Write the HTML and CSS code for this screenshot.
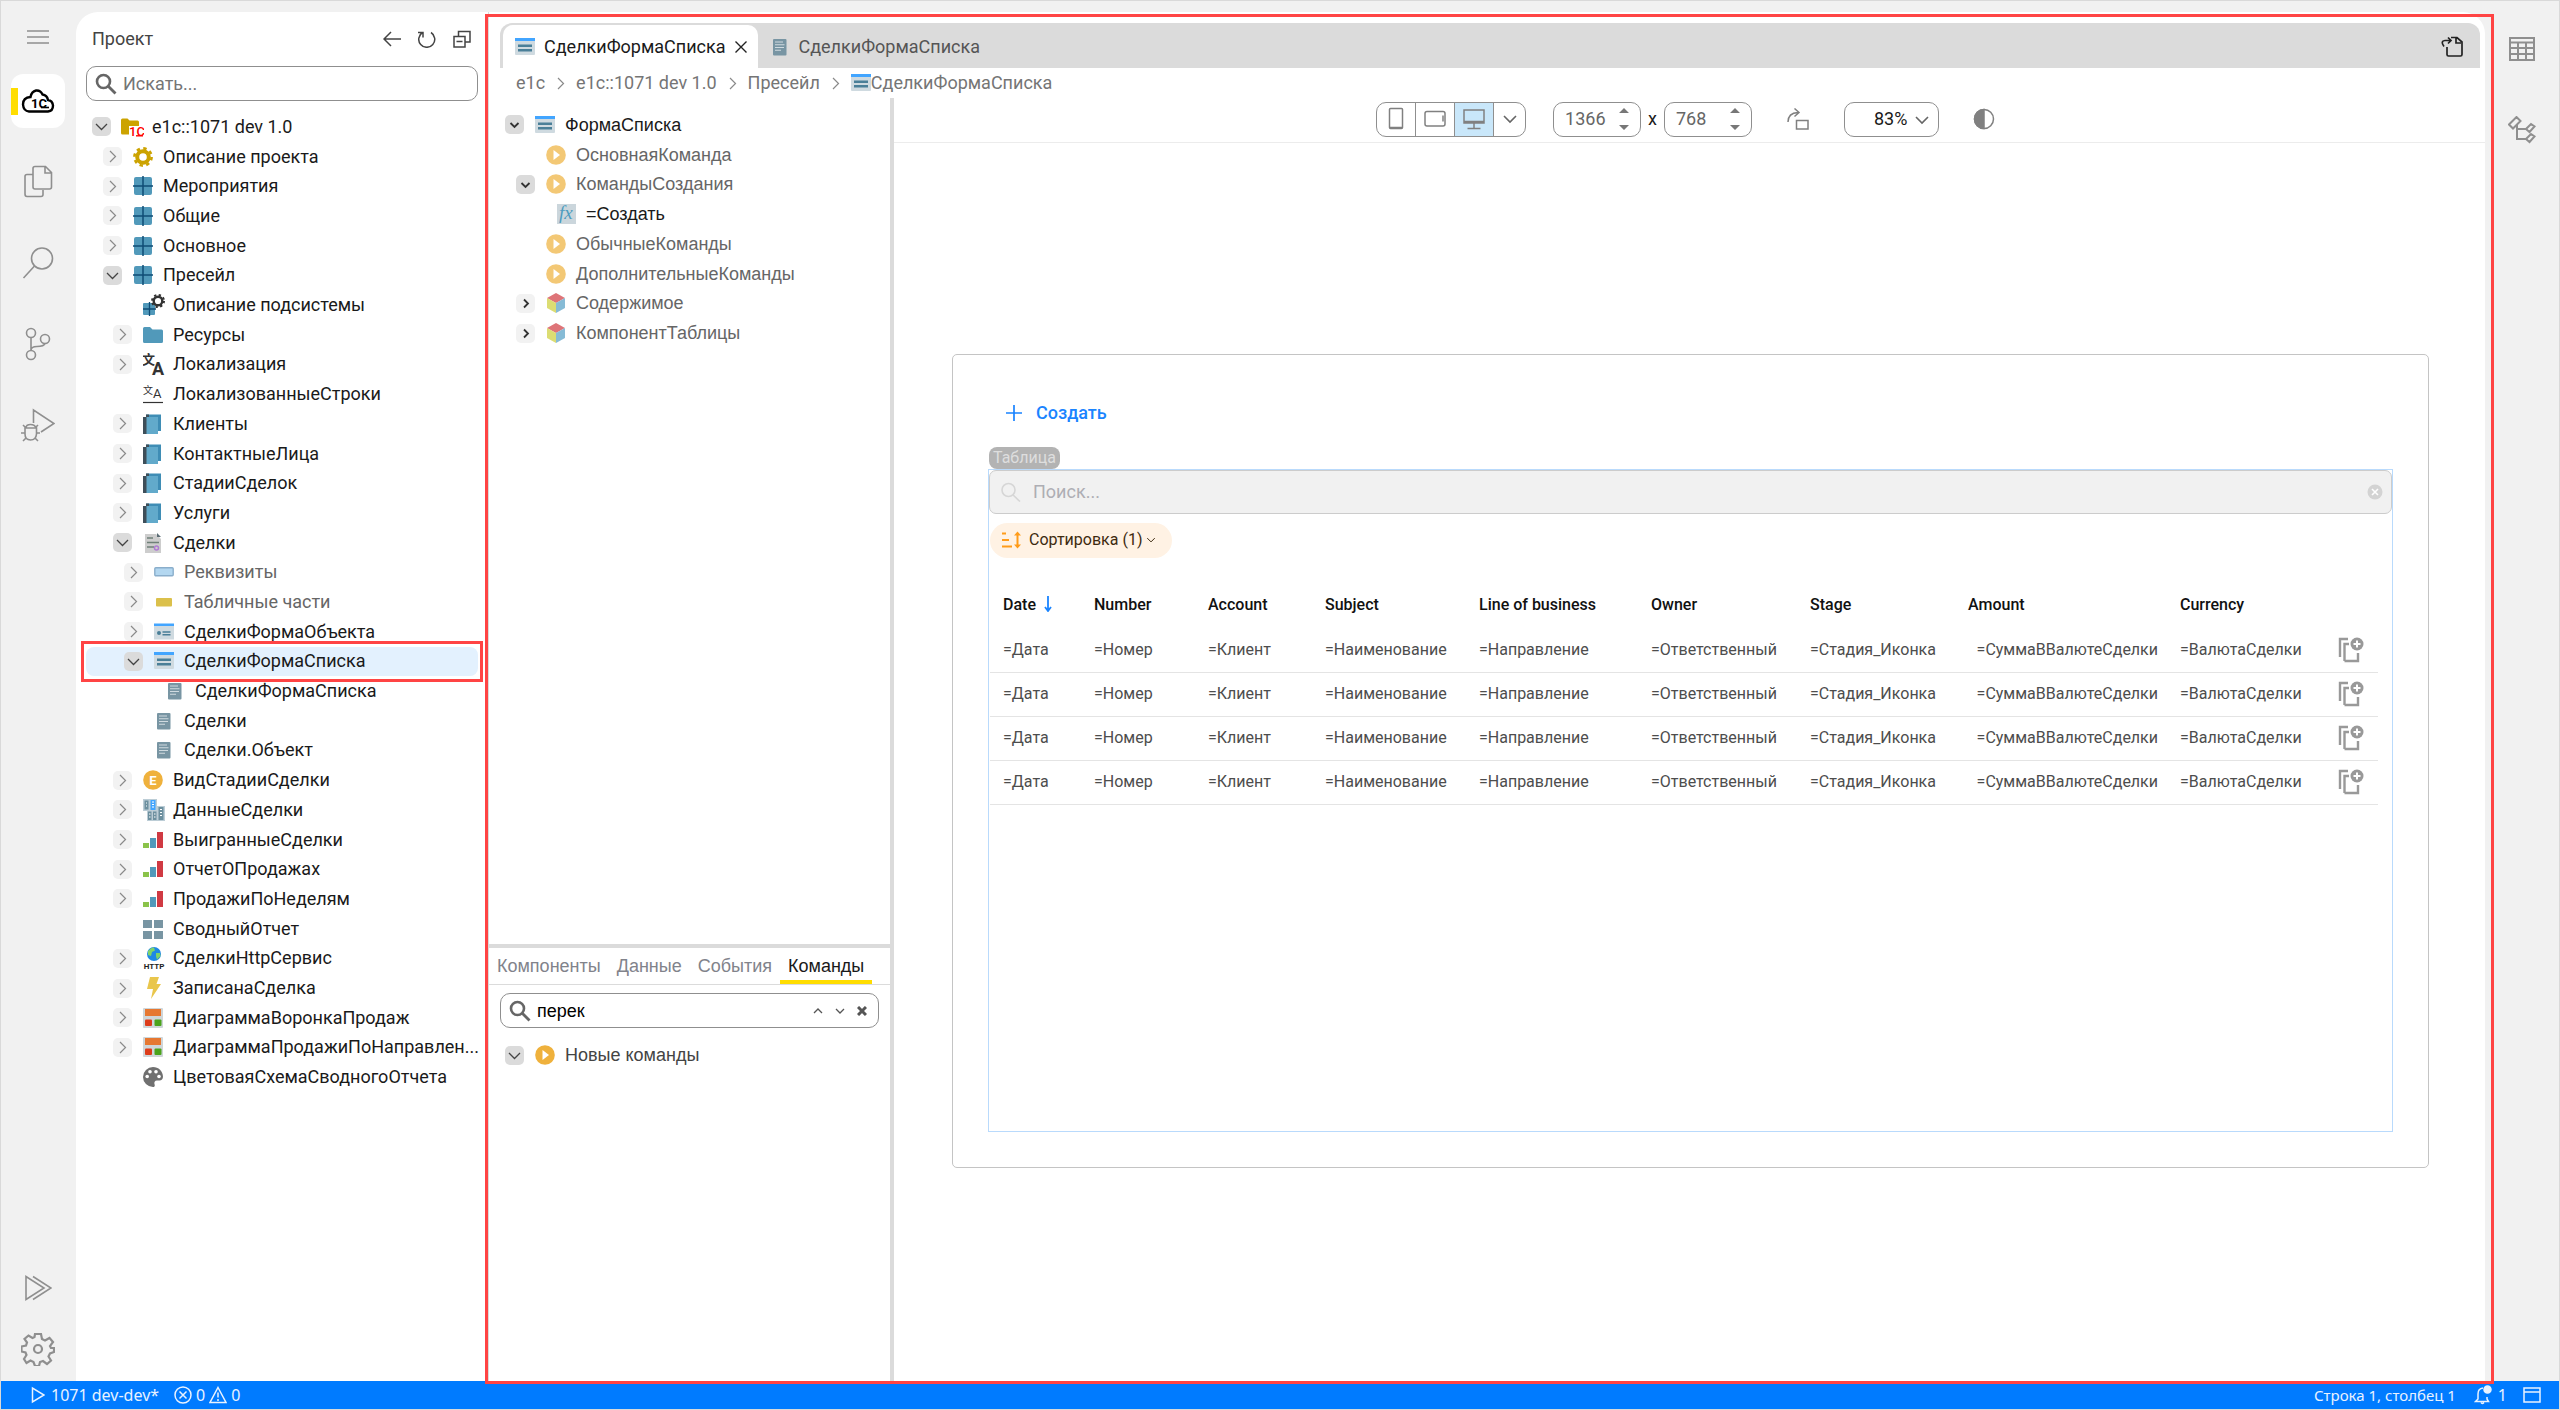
FILE: index.html
```html
<!DOCTYPE html>
<html lang="ru">
<head>
    <meta charset="UTF-8">
    <meta name="viewport" content="width=device-width, initial-scale=1.0">
    <title>СделкиФормаСписка</title>
    <link rel="stylesheet" href="styles.css">
</head>
<body>
    <!-- набор иконок -->
    <svg class="sprite" aria-hidden="true">
        <symbol id="right" viewBox="0 0 19 19"><path d="M7 4l5.500 5.500L7 15" fill="none" stroke="#8a8a8a" stroke-width="1.200"/></symbol>
        <symbol id="down" viewBox="0 0 19 19"><path d="M4 7l5.500 5.500L15 7" fill="none" stroke="#444" stroke-width="1.300"/></symbol>
        <symbol id="right-b" viewBox="0 0 19 19"><path d="M8 5.500l4 4-4 4" fill="none" stroke="#333" stroke-width="1.800"/></symbol>
        <symbol id="down-b" viewBox="0 0 19 19"><path d="M5.500 8l4 4 4-4" fill="none" stroke="#333" stroke-width="1.800"/></symbol>
        <symbol id="chev" viewBox="0 0 16 16"><path d="M2 5l6 6 6-6" fill="none" stroke="currentColor" stroke-width="1.600"/></symbol>
        <symbol id="lens" viewBox="0 0 22 22"><circle cx="8.500" cy="8.500" r="6.500" fill="none" stroke="#666" stroke-width="2.600"/><path d="M13 13l7.500 7.500" stroke="#666" stroke-width="2.800"/></symbol>

        <symbol id="root" viewBox="0 0 24 20"><path d="M1 3q0-1.500 1.500-1.500h5l2 2h8q1.500 0 1.500 1.500v4H9v8.500H2.500Q1 17.500 1 16z" fill="#cca300"/><text x="9" y="19" font-family="Roboto" font-size="13" font-weight="500" fill="#f00">1C</text><path d="M16 18.800h7" stroke="#f00" stroke-width="1.400"/></symbol>
        <symbol id="cog" viewBox="0 0 20 20"><circle cx="10" cy="10" r="5.800" fill="none" stroke="#cca300" stroke-width="4"/><circle cx="10" cy="10" r="8.600" fill="none" stroke="#cca300" stroke-width="2.600" stroke-dasharray="3.400 3.354"/></symbol>
        <symbol id="sub" viewBox="0 0 20 20"><rect x="1" y="1" width="18" height="18" rx="2" fill="#5199ba"/><path d="M10 0v20M0 10h20" stroke="#0f4c75" stroke-width="1.500"/></symbol>
        <symbol id="subcog" viewBox="0 0 22 22"><rect x="0" y="9" width="12" height="12" rx="1" fill="#5199ba"/><path d="M6.500 8v14M0 15h13" stroke="#0f4c75" stroke-width="1.300"/><circle cx="15" cy="7" r="4.300" fill="#fff" stroke="#333" stroke-width="2.400"/><circle cx="15" cy="7" r="6" fill="none" stroke="#333" stroke-width="2" stroke-dasharray="2.300 2.412"/></symbol>
        <symbol id="folder" viewBox="0 0 20 20"><path d="M0 3.500Q0 2 1.500 2H7l2.500 2.500h9q1.500 0 1.500 1.500v10.500q0 1.500-1.500 1.500h-17Q0 18 0 16.500z" fill="#5199ba"/></symbol>
        <symbol id="lang" viewBox="0 0 22 22"><text x="-1" y="11" font-family="Noto Sans CJK SC" font-size="13" font-weight="700" fill="#333">文</text><text x="9" y="22" font-family="Roboto" font-size="18" font-weight="700" fill="#333">A</text></symbol>
        <symbol id="langs" viewBox="0 0 20 20"><text x="0" y="10" font-family="Noto Sans CJK SC" font-size="10" fill="#333">文</text><text x="10" y="14" font-family="Roboto" font-size="13" fill="#333">A</text><path d="M0 18.500h20" stroke="#333" stroke-width="1.200"/></symbol>
        <symbol id="book" viewBox="0 0 20 20"><path d="M3 .500h15V17h-3z" fill="#3f8db5"/><path d="M0 3h4v17H0zM3 .500h3V3H3z" fill="#3e4e59"/><path d="M3.500 3H15v17H3.500z" fill="#62aacb"/></symbol>
        <symbol id="doc" viewBox="0 0 20 20"><path d="M2 1h11l5 5v14H2z" fill="#cdcdcd"/><path d="M14 0l4 4h-4z" fill="#5b6c74"/><path d="M4 5h6M4 9.500h12M4 14h7" stroke="#6f8078" stroke-width="1.300"/><circle cx="13.500" cy="15" r="2" fill="none" stroke="#b07bd4" stroke-width="1.500"/></symbol>
        <symbol id="attr" viewBox="0 0 20 20"><rect x=".800" y="5.800" width="18.400" height="8" rx="1" fill="#b3d7f0" stroke="#8aaecb" stroke-width="1.400"/></symbol>
        <symbol id="tab" viewBox="0 0 20 20"><rect x="2" y="6" width="16" height="8.500" rx="1" fill="#dbc04b"/></symbol>
        <symbol id="objform" viewBox="0 0 20 20"><rect y="2" width="20" height="15.500" fill="#cfdae0"/><rect y="1.500" width="20" height="2.500" fill="#42a5ff"/><circle cx="5" cy="11" r="2" fill="#4a7f98"/><path d="M8.500 10h8M8.500 12.700h8" stroke="#4a7f98" stroke-width="1.400"/></symbol>
        <symbol id="form" viewBox="0 0 20 20"><rect y="2" width="20" height="16" rx="1" fill="#cfdae0"/><rect y="1" width="20" height="3" fill="#42a5ff"/><rect x="3" y="7.500" width="14" height="2.500" fill="#4a7f98"/><rect x="3" y="12" width="14" height="2.500" fill="#4a7f98"/></symbol>
        <symbol id="module" viewBox="0 0 20 20"><rect x="3" y="2" width="13.500" height="16.500" rx="1" fill="#7895a3"/><path d="M5 5h8M5 7.700h9.500M5 10.500h9M5 13.200h6" stroke="#cfdae0" stroke-width="1.100"/></symbol>
        <symbol id="enum" viewBox="0 0 20 20"><circle cx="10" cy="10" r="9.800" fill="#efb13c"/><text x="10" y="14.800" text-anchor="middle" font-family="Roboto" font-size="13" font-weight="700" fill="#fff">E</text></symbol>
        <symbol id="reg" viewBox="0 0 22 22"><rect width="14" height="12" fill="#bccdd6"/><rect x="4" y="7" width="18" height="15" fill="#bccdd6"/><path d="M1.500 1.500h4v9h-4zM5 12.500h3.500V21H5zM10 12.500h3.500V21H10zM15.500 8h5v13h-5z" fill="#6d909f"/><path d="M7.500 1h5v10h-5z" fill="#42a5ff"/><path d="M9 3h2M9 5.500h2M9 8h2M3 4h1M3 7h1M6 15h1.500M6 18h1.500M11 15h1.500M11 18h1.500M17 10.500h2M17 13.500h2M17 16.500h2" stroke="#fff"/></symbol>
        <symbol id="report" viewBox="0 0 20 20"><rect y="13" width="6" height="5" fill="#8bc34a"/><rect x="7" y="8" width="6" height="10" fill="#5199ba"/><rect x="14" y="2" width="6" height="16" fill="#d03a43"/></symbol>
        <symbol id="grid" viewBox="0 0 20 20"><path d="M0 1h9v8H0zM11 1h9v8h-9zM0 12h9v8H0zM11 12h9v8h-9z" fill="#7895a3"/></symbol>
        <symbol id="http" viewBox="0 0 22 22"><circle cx="11" cy="7" r="7" fill="#1e88e5"/><path d="M5 4q3-4 6-3.500l1 3-3 1.500-1 4-3-1zM13 6l4 0 .5 3-3.500 3.500-1-3z" fill="#7ed36a"/><text x="11" y="22" text-anchor="middle" font-family="Roboto" font-size="8" font-weight="700" fill="#222">HTTP</text></symbol>
        <symbol id="bolt" viewBox="0 0 20 22"><path d="M6 0h9l-2.500 7H17L7 22l2-10H3z" fill="#e9c64c"/></symbol>
        <symbol id="widget" viewBox="0 0 20 20"><rect width="20" height="20" rx="1" fill="#cfd6d9"/><rect x="2" y="1" width="16" height="7" fill="#e67832"/><rect x="2" y="11.500" width="7" height="6.500" rx="1" fill="#dd3c1a"/><rect x="11.500" y="11.500" width="7" height="6.500" rx="1" fill="#4ba31c"/></symbol>
        <symbol id="palette" viewBox="0 0 20 20"><path d="M10 0a10 10 0 1 0 0 20c1.500 0 2.200-1.300 1.600-2.600-.800-1.800.200-3.900 2.400-3.900h2.500c2 0 3.500-1.600 3.500-3.700C20 4.200 15.500 0 10 0z" fill="#707070"/><g fill="#fff"><circle cx="4.200" cy="9.500" r="1.800"/><circle cx="7" cy="4.800" r="1.800"/><circle cx="13" cy="4.800" r="1.800"/><circle cx="16" cy="9.500" r="1.800"/></g></symbol>
        <symbol id="cmd" viewBox="0 0 20 20"><circle cx="10" cy="10" r="9.800" fill="#efb13c"/><path d="M7.500 5v10l6.500-5z" fill="#fff"/></symbol>
        <symbol id="fx" viewBox="0 0 20 20"><rect x="1" width="19" height="20" fill="#cbd6dc"/><text x="3" y="15" font-family="Liberation Serif" font-style="italic" font-size="19" fill="#4d9cbf">fx</text></symbol>
        <symbol id="cube" viewBox="0 0 20 20"><path d="M10 0l9 5-9 5-9-5z" fill="#de7478"/><path d="M1 5l9 5v10l-9-5z" fill="#dcdd73"/><path d="M19 5l-9 5v10l9-5z" fill="#86bbd6"/></symbol>
        <symbol id="copyadd" viewBox="0 0 26 26"><path d="M2 20V2h8M6.500 24V7H11M6.500 24H20v-8" fill="none" stroke="#999" stroke-width="2.400"/><circle cx="19" cy="7" r="6.500" fill="#999"/><path d="M19 3.500v7M15.500 7h7" stroke="#fff" stroke-width="2"/></symbol>
    </svg>

    <main class="workbench">
        <nav class="rail">
            <button class="burger" aria-label="Меню"><svg width="22" height="14" viewBox="0 0 22 14"><path d="M0 1h22M0 7h22M0 13h22"/></svg></button>
            <button class="active" aria-label="Проект"><svg class="cloud" width="34" height="26" viewBox="0 0 34 26"><path d="M8 23.500h19q5-.500 5-6-.500-5-5-5.500-1-5-5.500-5.500Q19.500 2 15 2.500 10.500 3.500 9.500 9 2 9.500 2 16.500 2.500 23 8 23.500z"/><text x="10" y="20" font-family="Roboto" font-size="13" font-weight="700">1C</text><path d="M20 19.500h8" stroke-width="1.600"/></svg></button>
            <button aria-label="Файлы"><svg width="30" height="34" viewBox="0 0 30 34"><path d="M10 3.500q0-2 2-2h10.500l6 6V22q0 2-2 2H12q-2 0-2-2zM22 2v6h6M9.500 9.500H4q-2 0-2 2V29q0 2.500 2 2.500h14q2 0 2-2V25"/></svg></button>
            <button aria-label="Поиск"><svg width="32" height="34" viewBox="0 0 32 34"><circle cx="20" cy="12.500" r="10.500"/><path d="M12.500 20L1.500 32"/></svg></button>
            <button aria-label="Версии"><svg width="28" height="34" viewBox="0 0 28 34"><circle cx="7" cy="6" r="4.500"/><circle cx="7" cy="28" r="4.500"/><circle cx="21" cy="12" r="4.500"/><path d="M7 10.500v13q0-4 6-4 7 0 8-3"/></svg></button>
            <button aria-label="Отладка"><svg width="34" height="34" viewBox="0 0 34 34"><path d="M12.500 15V2L33 15.500 20 24M4 20h11.500v6q-.500 6-6 6T4 26zM5 20q0-3.500 4.500-3.500T15 20M4 25H0M19 25h-4M2 17l3 3M17 17l-3 3M2 33l3-3M17 33l-3-3"/></svg></button>
            <span class="spacer"></span>
            <span class="bottom">
                <button aria-label="Запуск"><svg width="28" height="28" viewBox="0 0 28 28"><path d="M2 2.500v23L20 14zM9 2.500L27 14 9 25.500"/></svg></button>
                <button aria-label="Настройки"><svg width="34" height="34" viewBox="0 0 34 34"><path stroke-width="2.200" d="M14 2h6l1 5 3 1.500 4.500-2.500 3.500 4-3 4 1 2h3v4l-4 1.500-1.500 3 2.500 4-4 3.500-4-3-3 1-1 4h-4l-1.500-4-3-1.500-4 2.500L3 27l2.500-4-1-2.500-4-1v-5l4.500-1 1-3L3.500 7l4-3.500 4 2.500 2-1z"/><circle cx="17" cy="17" r="4" stroke-width="2.200"/></svg></button>
            </span>
        </nav>

        <aside class="sidebar">
            <header class="side-head">
                <h1>Проект</h1>
                <button aria-label="Назад"><svg width="18" height="18" viewBox="0 0 18 18"><path d="M18 9H1.500M8 2L1 9l7 7"/></svg></button>
                <button aria-label="Обновить"><svg width="18" height="18" viewBox="0 0 18 18"><path d="M13 2.500a8 8 0 1 1-8.500 0M0 2.500h5v5"/></svg></button>
                <button aria-label="Свернуть всё"><svg width="18" height="18" viewBox="0 0 18 18"><path d="M1 6.500h11V17H1zM5.500 6V1.500H17V12h-4.500M3.500 11.500h6"/></svg></button>
            </header>
            <label class="search"><svg width="22" height="22"><use href="#lens"/></svg><input type="text" placeholder="Искать..." aria-label="Искать"></label>

            <ul class="tree project">
                <li><button class="open" aria-label="Свернуть"><svg><use href="#down"/></svg></button><svg class="ico wide"><use href="#root"/></svg><span>e1c::1071 dev 1.0</span></li>
                <li class="l1"><button aria-label="Развернуть"><svg><use href="#right"/></svg></button><svg class="ico"><use href="#cog"/></svg><span>Описание проекта</span></li>
                <li class="l1"><button aria-label="Развернуть"><svg><use href="#right"/></svg></button><svg class="ico"><use href="#sub"/></svg><span>Мероприятия</span></li>
                <li class="l1"><button aria-label="Развернуть"><svg><use href="#right"/></svg></button><svg class="ico"><use href="#sub"/></svg><span>Общие</span></li>
                <li class="l1"><button aria-label="Развернуть"><svg><use href="#right"/></svg></button><svg class="ico"><use href="#sub"/></svg><span>Основное</span></li>
                <li class="l1"><button class="open" aria-label="Свернуть"><svg><use href="#down"/></svg></button><svg class="ico"><use href="#sub"/></svg><span>Пресейл</span></li>
                <li class="l2 leaf"><svg class="ico big"><use href="#subcog"/></svg><span>Описание подсистемы</span></li>
                <li class="l2"><button aria-label="Развернуть"><svg><use href="#right"/></svg></button><svg class="ico"><use href="#folder"/></svg><span>Ресурсы</span></li>
                <li class="l2"><button aria-label="Развернуть"><svg><use href="#right"/></svg></button><svg class="ico big"><use href="#lang"/></svg><span>Локализация</span></li>
                <li class="l2 leaf"><svg class="ico"><use href="#langs"/></svg><span>ЛокализованныеСтроки</span></li>
                <li class="l2"><button aria-label="Развернуть"><svg><use href="#right"/></svg></button><svg class="ico"><use href="#book"/></svg><span>Клиенты</span></li>
                <li class="l2"><button aria-label="Развернуть"><svg><use href="#right"/></svg></button><svg class="ico"><use href="#book"/></svg><span>КонтактныеЛица</span></li>
                <li class="l2"><button aria-label="Развернуть"><svg><use href="#right"/></svg></button><svg class="ico"><use href="#book"/></svg><span>СтадииСделок</span></li>
                <li class="l2"><button aria-label="Развернуть"><svg><use href="#right"/></svg></button><svg class="ico"><use href="#book"/></svg><span>Услуги</span></li>
                <li class="l2"><button class="open" aria-label="Свернуть"><svg><use href="#down"/></svg></button><svg class="ico"><use href="#doc"/></svg><span>Сделки</span></li>
                <li class="l3 muted"><button aria-label="Развернуть"><svg><use href="#right"/></svg></button><svg class="ico"><use href="#attr"/></svg><span>Реквизиты</span></li>
                <li class="l3 muted"><button aria-label="Развернуть"><svg><use href="#right"/></svg></button><svg class="ico"><use href="#tab"/></svg><span>Табличные части</span></li>
                <li class="l3"><button aria-label="Развернуть"><svg><use href="#right"/></svg></button><svg class="ico"><use href="#objform"/></svg><span>СделкиФормаОбъекта</span></li>
                <li class="l3 selected"><button class="open" aria-label="Свернуть"><svg><use href="#down"/></svg></button><svg class="ico"><use href="#form"/></svg><span>СделкиФормаСписка</span></li>
                <li class="l4 leaf"><svg class="ico"><use href="#module"/></svg><span>СделкиФормаСписка</span></li>
                <li class="l3 leaf"><svg class="ico"><use href="#module"/></svg><span>Сделки</span></li>
                <li class="l3 leaf"><svg class="ico"><use href="#module"/></svg><span>Сделки.Объект</span></li>
                <li class="l2"><button aria-label="Развернуть"><svg><use href="#right"/></svg></button><svg class="ico"><use href="#enum"/></svg><span>ВидСтадииСделки</span></li>
                <li class="l2"><button aria-label="Развернуть"><svg><use href="#right"/></svg></button><svg class="ico big"><use href="#reg"/></svg><span>ДанныеСделки</span></li>
                <li class="l2"><button aria-label="Развернуть"><svg><use href="#right"/></svg></button><svg class="ico"><use href="#report"/></svg><span>ВыигранныеСделки</span></li>
                <li class="l2"><button aria-label="Развернуть"><svg><use href="#right"/></svg></button><svg class="ico"><use href="#report"/></svg><span>ОтчетОПродажах</span></li>
                <li class="l2"><button aria-label="Развернуть"><svg><use href="#right"/></svg></button><svg class="ico"><use href="#report"/></svg><span>ПродажиПоНеделям</span></li>
                <li class="l2 leaf"><svg class="ico"><use href="#grid"/></svg><span>СводныйОтчет</span></li>
                <li class="l2"><button aria-label="Развернуть"><svg><use href="#right"/></svg></button><svg class="ico big"><use href="#http"/></svg><span>СделкиHttpСервис</span></li>
                <li class="l2"><button aria-label="Развернуть"><svg><use href="#right"/></svg></button><svg class="ico big"><use href="#bolt"/></svg><span>ЗаписанаСделка</span></li>
                <li class="l2"><button aria-label="Развернуть"><svg><use href="#right"/></svg></button><svg class="ico"><use href="#widget"/></svg><span>ДиаграммаВоронкаПродаж</span></li>
                <li class="l2"><button aria-label="Развернуть"><svg><use href="#right"/></svg></button><svg class="ico"><use href="#widget"/></svg><span>ДиаграммаПродажиПоНаправлен...</span></li>
                <li class="l2 leaf"><svg class="ico"><use href="#palette"/></svg><span>ЦветоваяСхемаСводногоОтчета</span></li>
            </ul>
        </aside>

        <section class="editor">
            <div class="tabs">
                <div class="tab current"><svg class="ico"><use href="#form"/></svg><span>СделкиФормаСписка</span><button aria-label="Закрыть"><svg width="12" height="12" viewBox="0 0 12 12"><path d="M.500 .500l11 11M11.500 .500l-11 11" stroke="#222" stroke-width="1.400"/></svg></button></div>
                <div class="tab"><svg class="ico"><use href="#module"/></svg><span>СделкиФормаСписка</span></div>
                <button class="goto" aria-label="Открыть модуль"><svg width="22" height="22" viewBox="0 0 22 22" fill="none" stroke="#222" stroke-width="1.700"><path d="M6 11v7.500q0 1.500 1.500 1.500h12q1.500 0 1.500-1.500V6l-5-4.500H10M15 2v5h5M3 10.500Q-1 5 4 4.500h5M7 1.500l3 3-3 3"/></svg></button>
            </div>
            <nav class="crumbs">
                <a href="#">e1c</a><svg><use href="#right"/></svg><a href="#">e1c::1071 dev 1.0</a><svg><use href="#right"/></svg><a href="#">Пресейл</a><svg><use href="#right"/></svg><a href="#"><svg class="ico"><use href="#form"/></svg>СделкиФормаСписка</a>
            </nav>

            <div class="split">
                <div class="structure">
                    <ul class="tree form-tree">
                        <li><button class="open" aria-label="Свернуть"><svg><use href="#down-b"/></svg></button><svg class="ico"><use href="#form"/></svg><span>ФормаСписка</span></li>
                        <li class="l1 leaf muted"><svg class="ico pale"><use href="#cmd"/></svg><span>ОсновнаяКоманда</span></li>
                        <li class="l1 muted"><button class="open" aria-label="Свернуть"><svg><use href="#down-b"/></svg></button><svg class="ico pale"><use href="#cmd"/></svg><span>КомандыСоздания</span></li>
                        <li class="l2 leaf"><svg class="ico"><use href="#fx"/></svg><span>=Создать</span></li>
                        <li class="l1 leaf muted"><svg class="ico pale"><use href="#cmd"/></svg><span>ОбычныеКоманды</span></li>
                        <li class="l1 leaf muted"><svg class="ico pale"><use href="#cmd"/></svg><span>ДополнительныеКоманды</span></li>
                        <li class="l1 muted"><button aria-label="Развернуть"><svg><use href="#right-b"/></svg></button><svg class="ico"><use href="#cube"/></svg><span>Содержимое</span></li>
                        <li class="l1 muted"><button aria-label="Развернуть"><svg><use href="#right-b"/></svg></button><svg class="ico"><use href="#cube"/></svg><span>КомпонентТаблицы</span></li>
                    </ul>
                    <div class="toolbox">
                        <div class="tool-tabs">
                            <button>Компоненты</button><button>Данные</button><button>События</button><button class="current">Команды</button>
                        </div>
                        <div class="search"><svg width="22" height="22"><use href="#lens"/></svg><input type="text" value="перек" aria-label="Поиск команды">
                            <button aria-label="Предыдущее"><svg width="10" height="10" viewBox="0 0 10 10"><path d="M1 7l4-4 4 4" fill="none" stroke="#555" stroke-width="1.300"/></svg></button>
                            <button aria-label="Следующее"><svg width="10" height="10" viewBox="0 0 10 10"><path d="M1 3l4 4 4-4" fill="none" stroke="#555" stroke-width="1.300"/></svg></button>
                            <button aria-label="Очистить"><svg width="10" height="10" viewBox="0 0 10 10"><path d="M1 1l8 8M9 1L1 9" stroke="#555" stroke-width="3"/></svg></button>
                        </div>
                        <ul class="tree found"><li><button class="open" aria-label="Свернуть"><svg><use href="#down"/></svg></button><svg class="ico"><use href="#cmd"/></svg><span>Новые команды</span></li></ul>
                    </div>
                </div>

                <div class="preview">
                    <div class="toolbar">
                        <div class="devices">
                            <button aria-label="Телефон"><svg width="16" height="24" viewBox="0 0 16 24"><rect x="1.500" y="1.500" width="13" height="20" rx="1"/><path d="M2 20.500h12"/></svg></button>
                            <button aria-label="Планшет"><svg width="22" height="18" viewBox="0 0 22 18"><rect x="1" y="1.500" width="20" height="14.500" rx="2"/><path d="M19 5.500v6"/></svg></button>
                            <button class="on" aria-label="Компьютер"><svg width="22" height="22" viewBox="0 0 22 22"><path d="M1 2h20v13H1zM1 13.500h20M11 15v5M4.500 20.500h13"/></svg></button>
                            <button aria-label="Ещё"><svg width="16" height="16"><use href="#chev"/></svg></button>
                        </div>
                        <label class="num"><input type="text" value="1366" aria-label="Ширина"><svg width="10" height="22" viewBox="0 0 10 22"><path d="M0 5l5-5 5 5zM0 17l5 5 5-5z" fill="#777"/></svg></label>
                        <span class="by">x</span>
                        <label class="num"><input type="text" value="768" aria-label="Высота"><svg width="10" height="22" viewBox="0 0 10 22"><path d="M0 5l5-5 5 5zM0 17l5 5 5-5z" fill="#777"/></svg></label>
                        <button class="rotate" aria-label="Повернуть"><svg width="22" height="22" viewBox="0 0 22 22"><path d="M1 14Q1 5 11 4.500M7.500 .500l4.500 4-4.500 4M9.500 12.500H21v8.500H9.500z"/></svg></button>
                        <label class="zoom"><select aria-label="Масштаб"><option>83%</option></select><svg width="16" height="16"><use href="#chev"/></svg></label>
                        <button class="theme" aria-label="Тема"><svg width="22" height="22" viewBox="0 0 22 22"><circle cx="11" cy="11" r="9.500"/><path d="M11 1.500a9.500 9.500 0 0 0 0 19z" fill="#808080"/></svg></button>
                    </div>
                    <div class="stage">
                        <div class="frame">
                            <button class="create"><svg width="18" height="18" viewBox="0 0 18 18"><path d="M9 1v16M1 9h16" stroke="currentColor" stroke-width="1.700"/></svg>Создать</button>
                            <div class="tbl-box">
                                <span class="tag">Таблица</span>
                                <label class="find">
                                    <svg width="20" height="20" viewBox="0 0 20 20"><circle cx="7.500" cy="8" r="6.500"/><path d="M12 13l7 6.500"/></svg>
                                    <input type="text" placeholder="Поиск..." aria-label="Поиск">
                                    <svg width="16" height="16" viewBox="0 0 16 16"><circle cx="8" cy="8" r="7.500" fill="#d3d3d3" stroke="none"/><path d="M5 5l6 6M11 5l-6 6" stroke="#fff"/></svg>
                                </label>
                                <button class="sort"><svg width="20" height="18" viewBox="0 0 20 18"><path d="M0 2.500h4M0 9h7M0 15.500h10M15.500 2v14" stroke="#ff9c1a" stroke-width="2"/><path d="M12 4.500L15.500 .500l3.500 4zM12 13.500l3.500 4 3.500-4z" fill="#ff9c1a"/></svg>Сортировка (1)<svg class="caret" width="10" height="10"><use href="#chev"/></svg></button>
                                <table>
                                    <colgroup><col class="c-date"><col class="c-num"><col class="c-acc"><col class="c-subj"><col class="c-line"><col class="c-own"><col class="c-stage"><col class="c-sum"><col class="c-cur"><col class="c-act"></colgroup>
                                    <thead>
                                        <tr><th>Date <svg width="8" height="16" viewBox="0 0 8 16"><path d="M4 0v14M1 11l3 4 3-4" fill="none" stroke="#1a84ff" stroke-width="1.800"/></svg></th><th>Number</th><th>Account</th><th>Subject</th><th>Line of business</th><th>Owner</th><th>Stage</th><th>Amount</th><th>Currency</th><th></th></tr>
                                    </thead>
                                    <tbody>
                                        <tr><td>=Дата</td><td>=Номер</td><td>=Клиент</td><td>=Наименование</td><td>=Направление</td><td>=Ответственный</td><td>=Стадия_Иконка</td><td class="sum">=СуммаВВалютеСделки</td><td>=ВалютаСделки</td><td><svg class="copy"><use href="#copyadd"/></svg></td></tr>
                                        <tr><td>=Дата</td><td>=Номер</td><td>=Клиент</td><td>=Наименование</td><td>=Направление</td><td>=Ответственный</td><td>=Стадия_Иконка</td><td class="sum">=СуммаВВалютеСделки</td><td>=ВалютаСделки</td><td><svg class="copy"><use href="#copyadd"/></svg></td></tr>
                                        <tr><td>=Дата</td><td>=Номер</td><td>=Клиент</td><td>=Наименование</td><td>=Направление</td><td>=Ответственный</td><td>=Стадия_Иконка</td><td class="sum">=СуммаВВалютеСделки</td><td>=ВалютаСделки</td><td><svg class="copy"><use href="#copyadd"/></svg></td></tr>
                                        <tr><td>=Дата</td><td>=Номер</td><td>=Клиент</td><td>=Наименование</td><td>=Направление</td><td>=Ответственный</td><td>=Стадия_Иконка</td><td class="sum">=СуммаВВалютеСделки</td><td>=ВалютаСделки</td><td><svg class="copy"><use href="#copyadd"/></svg></td></tr>
                                    </tbody>
                                </table>
                            </div>
                        </div>
                    </div>
                </div>
            </div>
        </section>

        <nav class="rail right">
            <button aria-label="Свойства"><svg width="26" height="26" viewBox="0 0 26 26"><path stroke-width="2" d="M1 2h24v22H1zM1 6.500h24M1 12h24M1 18h24M9 6.500V24M17 6.500V24"/></svg></button>
            <button aria-label="Структура"><svg width="28" height="28" viewBox="0 0 28 28"><path stroke-width="2" d="M1 8.500L8.500 1l4 4L5 12.500zM9 9v14h9M9 13h9M18 13l5-5 3.500 2.500-5 5.500zM18 23l5-5 3.500 2.500-5 5.500z"/></svg></button>
        </nav>
    </main>

    <footer class="status">
        <button><svg width="14" height="18" viewBox="0 0 14 18"><path d="M1.500 2v14L13 9z"/></svg>1071 dev-dev*</button>
        <button class="problems"><svg width="18" height="18" viewBox="0 0 18 18"><circle cx="9" cy="9" r="8"/><path d="M5.500 5.500l7 7M12.500 5.500l-7 7"/></svg>0<svg width="18" height="18" viewBox="0 0 18 18"><path d="M9 1.500l8 15H1zM9 6.500v5M9 13v2"/></svg>0</button>
        <span class="spacer"></span>
        <span class="pos">Строка 1, столбец 1</span>
        <button class="bell"><svg width="18" height="20" viewBox="0 0 18 20"><path d="M9 3Q4 3.500 4 9v5l-2.500 2.500h13L13 14v-2M7 17.500q1 2 3 0"/><circle cx="13.500" cy="4.500" r="3.500" fill="#e8f2ff"/></svg>1</button>
        <button aria-label="Панель"><svg width="18" height="16" viewBox="0 0 18 16"><path d="M1 1h16v14H1zM1 5h16"/></svg></button>
    </footer>
</body>
</html>
```

FILE: styles.css
```css
* {
    box-sizing: border-box;
}

body {
    margin: 0;
    height: 100vh;
    display: flex;
    flex-direction: column;
    border: 1px solid #d9d9d9;
    background: #f1f1f1;
    color: #1a1a1a;
    font-family: Roboto, "Liberation Sans", sans-serif;
    font-size: 18px;
    line-height: 24px;
    overflow: hidden;
}

button, input, select {
    font: inherit;
    color: inherit;
    background: none;
    border: none;
    padding: 0;
    margin: 0;
    outline: none;
}

button {
    display: flex;
    align-items: center;
    justify-content: center;
    cursor: pointer;
}

svg {
    flex: none;
    display: block;
}

.sprite {
    display: none;
}

.spacer {
    flex: 1;
}

.ico {
    width: 20px;
    height: 20px;
}

.workbench {
    flex: 1;
    min-height: 0;
    display: flex;
}

/* боковые панели с кнопками */
.rail {
    width: 75px;
    padding: 26px 0 5px 10px;
    display: flex;
    flex-direction: column;
    gap: 27px;
}

.rail button {
    width: 54px;
    height: 54px;
    border-radius: 12px;
}

.rail svg {
    fill: none;
    stroke: #8f8f8f;
    stroke-width: 1.6;
}

.rail .burger {
    height: 20px;
}

.rail .active {
    background: linear-gradient(#fd0, #fd0) 0 50% / 7px 27px no-repeat #fff;
}

.rail .cloud {
    stroke: #000;
    stroke-width: 2.4;
}

.rail .cloud text {
    fill: #000;
    stroke: none;
}

.rail .bottom {
    display: flex;
    flex-direction: column;
    gap: 7px;
}

.rail.right {
    width: 74px;
    padding-top: 21px;
}

/* дерево проекта */
.sidebar {
    width: 413px;
    margin-top: 11px;
    padding: 0 10px;
    background: #fff;
    border-right: 1px solid #dbdbdb;
    border-top-left-radius: 22px;
}

.side-head {
    height: 54px;
    padding: 0 7px 0 6px;
    display: flex;
    align-items: center;
    gap: 17px;
}

.side-head h1 {
    flex: 1;
    margin: 0;
    font-size: 18px;
    font-weight: 400;
    color: #444;
}

.side-head svg {
    fill: none;
    stroke: #444;
    stroke-width: 1.5;
}

.search {
    height: 35px;
    padding: 0 8px;
    display: flex;
    align-items: center;
    gap: 6px;
    border: 1px solid #8f8f8f;
    border-radius: 10px;
}

.search input {
    flex: 1;
    min-width: 0;
}

.search input::placeholder {
    color: #757575;
    opacity: 1;
}

.tree {
    list-style: none;
    margin: 0;
    padding: 0;
    display: grid;
    grid-auto-rows: 1fr;
}

.project {
    height: 980px;
    margin-top: 11px;
}

.tree li {
    position: relative;
    display: flex;
    align-items: center;
    padding: 0 6px;
    border-radius: 8px;
    min-width: 0;
}

.tree .l1 {
    padding-left: 17px;
}

.tree .l2 {
    padding-left: 27px;
}

.tree .l3 {
    padding-left: 38px;
}

.tree .l4 {
    padding-left: 49px;
}

.tree button {
    width: 19px;
    height: 19px;
    background: #f2f2f2;
    border-radius: 5px;
}

.tree button svg {
    width: 19px;
    height: 19px;
}

.tree .open {
    background: #dbdbdb;
}

.tree .ico {
    margin: 0 10px 0 11px;
}

.tree .leaf .ico {
    margin-left: 30px;
}

.tree .wide {
    width: 24px;
    margin: 0 8px 0 9px;
}

.tree .big {
    width: 22px;
    height: 22px;
    margin-right: 8px;
}

.tree span {
    white-space: nowrap;
}

.tree .muted {
    color: #666;
}

.tree .pale {
    opacity: .7;
}

.tree .selected {
    background: #e3f1fe;
}

.tree .selected::after {
    content: "";
    position: absolute;
    inset: -6px -5px;
    border: 3px solid #ff4444;
}

/* редактор формы */
.editor {
    position: relative;
    flex: 1;
    min-width: 0;
    margin-top: 11px;
    padding-top: 11px;
    display: flex;
    flex-direction: column;
    background: #fff;
    border-top-right-radius: 22px;
}

.editor::after {
    content: "";
    position: absolute;
    inset: 2px -9px -3px -4px;
    border: 3px solid #ff4444;
    pointer-events: none;
}

.tabs {
    height: 45px;
    margin: 0 5px 0 11px;
    padding: 2px 17px 0 3px;
    display: flex;
    background: #dbdbdb;
    border-radius: 12px 12px 0 0;
}

.tab {
    display: flex;
    align-items: center;
    gap: 9px;
    padding: 0 11px 0 12px;
    border-radius: 10px 10px 0 0;
    color: #555;
}

.tab.current {
    background: #fff;
    color: #1a1a1a;
}

.goto {
    margin-left: auto;
}

.crumbs {
    height: 30px;
    padding-left: 27px;
    display: flex;
    align-items: center;
    gap: 6px;
}

.crumbs > svg {
    width: 19px;
    height: 19px;
}

.crumbs a {
    display: flex;
    align-items: center;
    color: #757575;
    text-decoration: none;
}

.split {
    flex: 1;
    min-height: 0;
    display: flex;
}

.structure {
    width: 405px;
    display: flex;
    flex-direction: column;
    border-right: 4px solid #dbdbdb;
    color: #1a1a1a;
    font-family: "Liberation Sans", Arial, sans-serif;
}

.form-tree {
    height: 238px;
    margin: 12px 10px auto;
}

.toolbox {
    height: 437px;
    border-top: 4px solid #dbdbdb;
}

.tool-tabs {
    height: 37px;
    display: flex;
    border-bottom: 1px solid #dbdbdb;
}

.tool-tabs button {
    padding: 0 8px;
    color: #81838b;
}

.tool-tabs .current {
    color: #1a1a1a;
    border-bottom: 4px solid #fd0;
    border-top: 4px solid transparent;
}

.toolbox .search {
    margin: 8px 11px 12px;
    color: #000;
}

.toolbox .search button {
    margin: 0 3px;
}

.found {
    height: 30px;
    margin: 0 10px;
    color: #444;
}

/* предпросмотр */
.preview {
    flex: 1;
    min-width: 0;
    display: flex;
    flex-direction: column;
}

.toolbar {
    height: 45px;
    padding: 0 8px 2px 0;
    display: flex;
    align-items: center;
    justify-content: center;
    border-bottom: 1px solid #ececec;
    color: #666;
}

.toolbar svg {
    fill: none;
    stroke: #808080;
    stroke-width: 1.5;
}

.devices, .num, .zoom {
    height: 35px;
    display: flex;
    border: 1px solid #8f8f8f;
    border-radius: 10px;
    overflow: hidden;
}

.devices button {
    width: 39px;
    border-right: 1px solid #8f8f8f;
}

.devices button:last-child {
    width: 31px;
    border: none;
}

.devices .on {
    background: #c9e7fa;
}

.num {
    width: 88px;
    padding: 0 11px;
    align-items: center;
}

.num input {
    flex: 1;
    min-width: 0;
}

.num svg {
    stroke: none;
}

.devices {
    margin-right: 27px;
}

.by {
    margin: 0 7px;
    color: #1a1a1a;
}

.rotate {
    margin: 0 35px;
}

.zoom {
    position: relative;
    width: 95px;
    color: #1a1a1a;
}

.zoom select {
    width: 100%;
    padding-left: 29px;
    appearance: none;
}

.zoom svg {
    position: absolute;
    right: 8px;
    top: 9px;
    color: #666;
    pointer-events: none;
}

.theme {
    margin-left: 34px;
}

.stage {
    flex: 1;
    display: flex;
    align-items: center;
    padding: 0 57px 2px 58px;
}

.frame {
    flex: 1;
    aspect-ratio: 1476 / 814;
    padding: 41px 35px 35px;
    display: flex;
    flex-direction: column;
    align-items: flex-start;
    border: 1px solid #c4c4c4;
    border-radius: 5px;
}

.create {
    height: 34px;
    margin: 0 0 39px 17px;
    gap: 13px;
    font-weight: 500;
    color: #1a84ff;
}

.tbl-box {
    position: relative;
    flex: 1;
    width: 100%;
    border: 1px solid #b9dafc;
}

/* метка над таблицей */
.tag {
    position: absolute;
    left: 0;
    top: -23px;
    height: 22px;
    padding: 0 4px;
    border-radius: 8px;
    background: #b3b3b3;
    color: #dedede;
    font-size: 16px;
    line-height: 22px;
}

.find {
    height: 44px;
    padding: 0 8px 0 11px;
    display: flex;
    align-items: center;
    gap: 12px;
    background: #f1f1f1;
    border: 1px solid #ccc;
    border-radius: 7px;
}

.find svg {
    fill: none;
    stroke: #d6d6d6;
    stroke-width: 1.6;
}

.find input {
    flex: 1;
}

.find input::placeholder {
    color: #aeaeb4;
    opacity: 1;
}

.sort {
    height: 35px;
    margin: 9px 0 0 1px;
    padding: 0 16px 0 12px;
    gap: 7px;
    border-radius: 18px;
    background: #fff2e4;
    color: #3d2a10;
    font-size: 16px;
}

.sort .caret {
    margin-left: -3px;
}

table {
    width: calc(100% - 15px);
    margin: 23px 14px 0 1px;
    table-layout: fixed;
    border-collapse: separate;
    border-spacing: 0;
    font-size: 16px;
    line-height: 20px;
}

th, td {
    height: 44px;
    padding: 0 0 0 13px;
    text-align: left;
    white-space: nowrap;
}

th {
    height: 48px;
    font-weight: 500;
    color: #111;
}

th svg {
    display: inline-block;
    margin-left: 4px;
    vertical-align: -2px;
}

td {
    color: #4d4d4d;
    border-bottom: 1px solid #e4e4e4;
}

.sum {
    padding-right: 9px;
    text-align: right;
}

.copy {
    width: 26px;
    height: 26px;
}

.c-date { width: 91px; }
.c-num { width: 114px; }
.c-acc { width: 117px; }
.c-subj { width: 154px; }
.c-line { width: 172px; }
.c-own { width: 159px; }
.c-stage { width: 158px; }
.c-sum { width: 212px; }
.c-cur { width: 158px; }
.c-act { width: 53px; }

/* строка состояния */
.status {
    height: 28px;
    padding: 0 18px 0 30px;
    display: flex;
    align-items: center;
    background: #007bff;
    color: #e8f2ff;
    font-family: "Noto Sans", sans-serif;
    font-size: 16px;
}

.status svg {
    fill: none;
    stroke: #e8f2ff;
    stroke-width: 1.5;
}

.status button {
    gap: 6px;
}

.status .problems {
    gap: 4px;
    margin-left: 15px;
}

.status .pos {
    font-size: 15px;
}

.status .bell {
    margin: 0 16px 0 18px;
}
```
